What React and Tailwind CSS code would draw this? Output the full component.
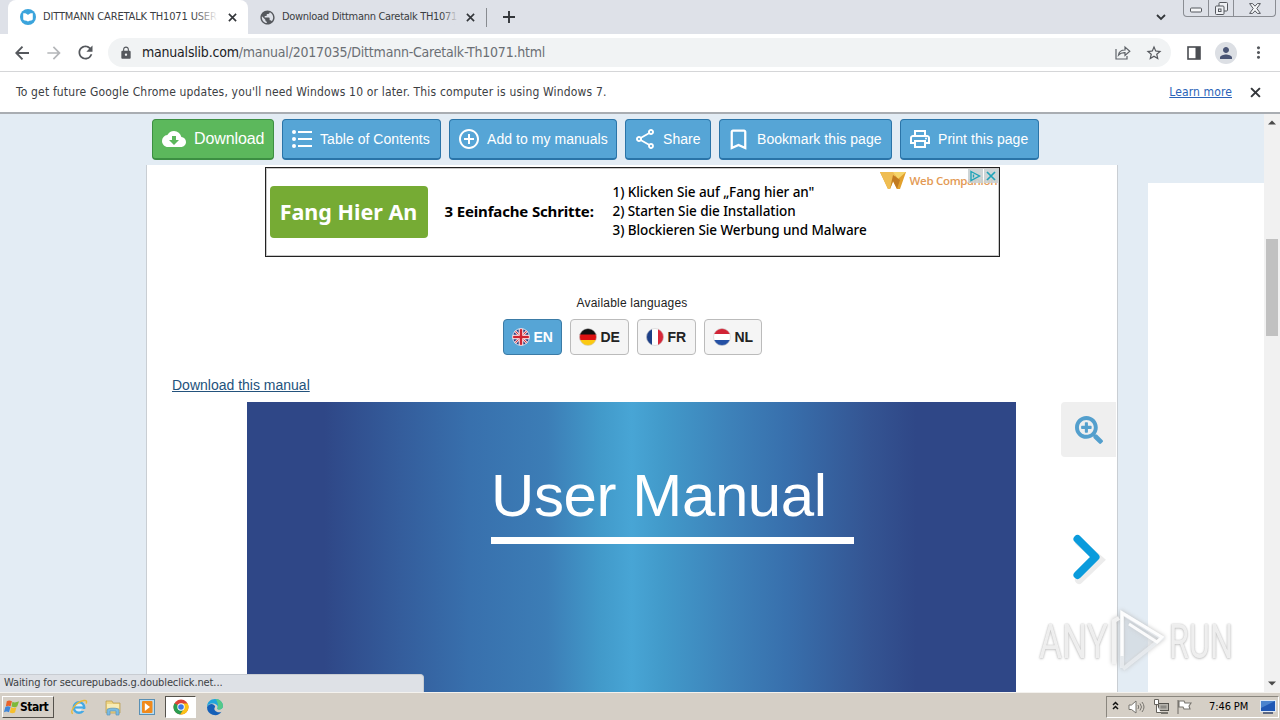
import React from 'react';
import {
  MdArrowForward,
  MdRefresh,
  MdLock,
  MdPublic,
  MdStarBorder,
  MdPerson,
  MdMoreVert,
  MdCloudDownload,
  MdAddCircleOutline,
  MdOutlineShare,
  MdBookmarkBorder,
  MdOutlineLocalPrintshop,
} from 'react-icons/md';
import { FaSearchPlus } from 'react-icons/fa';

const ListIcon = ({ className }) => (
  <svg width="24" height="24" viewBox="0 0 24 24" className={className} fill="currentColor">
    <circle cx="4" cy="5" r="2" />
    <circle cx="4" cy="12" r="2" />
    <circle cx="4" cy="19" r="2" />
    <path d="M8 4h14v2H8zM8 11h14v2H8zM8 18h14v2H8z" />
  </svg>
);

const Cross = ({ size, className }) => (
  <svg width={size} height={size} viewBox="0 0 10 10" className={className}>
    <path d="M1 1l8 8M9 1L1 9" stroke="#33363a" strokeWidth="1.800" />
  </svg>
);

const actions = [
  { label: 'Table of Contents', icon: ListIcon, size: 24, width: 'w-[159px]', pad: 'pl-[7px]', gap: 'gap-[6px]' },
  { label: 'Add to my manuals', icon: MdAddCircleOutline, size: 24, width: 'w-[168px]', pad: 'pl-[7px]', gap: 'gap-[6px]' },
  { label: 'Share', icon: MdOutlineShare, size: 24, width: 'w-[86px]', pad: 'pl-[7px]', gap: 'gap-[6px]' },
  { label: 'Bookmark this page', icon: MdBookmarkBorder, size: 27, width: 'w-[173px]', pad: 'pl-[5px]', gap: 'gap-[5px]' },
  { label: 'Print this page', icon: MdOutlineLocalPrintshop, size: 24, width: 'w-[139px]', pad: 'pl-[7px]', gap: 'gap-[6px]' },
];

const languages = [
  { code: 'EN', active: true },
  { code: 'DE' },
  { code: 'FR' },
  { code: 'NL' },
];

const Flag = ({ code }) => (
  <svg width="18" height="18" viewBox="0 0 18 18">
    <clipPath id={`flag-${code}`}>
      <circle cx="9" cy="9" r="8.6" />
    </clipPath>
    <g clipPath={`url(#flag-${code})`}>
      {code === 'EN' && (
        <>
          <rect width="18" height="18" fill="#2b3a7e" />
          <path d="M0 0l18 18M18 0L0 18" stroke="#fff" strokeWidth="2.6" />
          <path d="M0 0l18 18M18 0L0 18" stroke="#d0323f" strokeWidth="1.1" />
          <path d="M9 0v18M0 9h18" stroke="#fff" strokeWidth="4.6" />
          <path d="M9 0v18M0 9h18" stroke="#d0232f" strokeWidth="2.6" />
        </>
      )}
      {code === 'DE' && (
        <>
          <rect width="18" height="7" fill="#111" />
          <rect y="6.5" width="18" height="5.5" fill="#dd1212" />
          <rect y="12" width="18" height="6" fill="#fbc912" />
        </>
      )}
      {code === 'FR' && (
        <>
          <rect width="18" height="18" fill="#fff" />
          <rect width="6" height="18" fill="#1d3f87" />
          <rect x="12" width="6" height="18" fill="#d8283a" />
        </>
      )}
      {code === 'NL' && (
        <>
          <rect width="18" height="18" fill="#fff" />
          <rect width="18" height="6" fill="#d12436" />
          <rect y="12" width="18" height="6" fill="#2450a4" />
        </>
      )}
    </g>
    {code === 'EN' ? (
      <circle cx="9" cy="9" r="8.4" fill="none" stroke="#fff" strokeWidth="0.8" />
    ) : (
      <circle cx="9" cy="9" r="8.5" fill="none" stroke="#ccc" strokeWidth="0.6" />
    )}
  </svg>
);

const TabStrip = () => (
  <div className="relative flex h-[34px] bg-[#dee1e8] text-[11px] text-[#3a3d42]">
    <div className="ml-2 flex w-[240px] items-center rounded-t-lg bg-white pl-3">
      <svg width="16" height="16" viewBox="0 0 16 16" className="shrink-0">
        <circle cx="8" cy="8" r="8" fill="#3ba4dc" />
        <path d="M3.2 4.3c2-.3 3.600.3 4.800 1.600 1.200-1.300 2.800-1.900 4.800-1.600v5.500c0 1-.6 1.600-1.600 1.800-1.200.1-2.200.3-3.200 1-1-.7-2-.9-3.200-1-1-.2-1.600-.8-1.600-1.800z" fill="#fff" />
      </svg>
      <div className="relative ml-[7px] w-[175px] shrink-0 overflow-hidden whitespace-nowrap tracking-[-0.15px]">
        DITTMANN CARETALK TH1071 USER
        <div className="absolute inset-y-0 right-0 w-6 bg-linear-to-r from-transparent to-white" />
      </div>
      <Cross size={9} className="ml-[10px] shrink-0" />
    </div>
    <div className="flex w-[238px] items-center pl-[11px]">
      <MdPublic size={17} className="shrink-0 text-[#55585d]" />
      <div className="relative ml-[6px] w-[176px] shrink-0 overflow-hidden whitespace-nowrap tracking-[-0.3px]">
        Download Dittmann Caretalk TH1071
        <div className="absolute inset-y-0 right-0 w-4 bg-linear-to-r from-transparent to-[#dee1e8]" />
      </div>
      <Cross size={9} className="ml-[8px] shrink-0" />
    </div>
    <div className="mt-[8px] h-[19px] w-px bg-[#888b90]" />
    <svg width="12" height="12" viewBox="0 0 12 12" className="mt-[11px] ml-[16px]">
      <path d="M6 0v12M0 6h12" stroke="#33363a" strokeWidth="1.900" />
    </svg>
    <svg width="10" height="7" viewBox="0 0 10 7" className="mt-[14px] ml-auto shrink-0">
      <path d="M1 1l4 4 4-4" fill="none" stroke="#33363a" strokeWidth="1.800" />
    </svg>
    <div className="mr-1 ml-[17px] flex h-[17px] w-[93px] rounded-b border border-t-0 border-[#8a8d93]">
      <div className="flex w-[25px] items-center justify-center border-r border-[#8a8d93]">
        <svg width="12" height="6" viewBox="0 0 12 6" className="mt-[4px]">
          <rect x="0.5" y="1" width="11" height="4" rx="1" fill="#f5f6f8" stroke="#55585e" />
        </svg>
      </div>
      <div className="flex w-[25px] items-center justify-center border-r border-[#8a8d93]">
        <svg width="13" height="13" viewBox="0 0 13 13">
          <rect x="4" y="0.500" width="8.500" height="8.500" rx="1" fill="#eef0f4" stroke="#55585e" />
          <rect x="0.500" y="4" width="8.500" height="8.500" rx="1" fill="#eef0f4" stroke="#55585e" />
          <rect x="3.500" y="7" width="2.500" height="2.500" fill="none" stroke="#55585e" />
        </svg>
      </div>
      <div className="flex flex-1 items-center justify-center">
        <svg width="12" height="11" viewBox="0 0 12 11">
          <path d="M0.600 0.600h3L6 3.200 8.400 0.600h3L7.800 5.500l3.600 4.900h-3L6 7.800 3.600 10.400h-3L4.200 5.500z" fill="#f5f6f8" stroke="#55585e" />
        </svg>
      </div>
    </div>
  </div>
);

const AddressBar = () => (
  <div className="flex h-[38px] items-center border-b border-[#d5d6d8] bg-white text-[#55585d]">
    <svg width="14" height="14" viewBox="0 0 14 14" className="ml-[15px]">
      <path d="M14 7H1.500M7.500 0.700L1.300 7l6.200 6.300" fill="none" stroke="#55585d" strokeWidth="1.900" />
    </svg>
    <MdArrowForward size={20} className="ml-[15px] text-[#b4b6b9]" />
    <MdRefresh size={21} className="ml-[11px]" />
    <div className="ml-[12px] flex h-[29px] w-[1063px] items-center rounded-full bg-[#f1f3f4]">
      <MdLock size={14} className="ml-[11px]" />
      <span className="ml-[9px] text-[14px] tracking-[-0.21px] whitespace-nowrap text-[#6b6f74]">
        <span className="text-[#202124]">manualslib.com</span>/manual/2017035/Dittmann-Caretalk-Th1071.html
      </span>
      <svg width="16" height="15" viewBox="0 0 16 15" className="mr-[14px] ml-auto shrink-0">
        <path d="M1 4v10h11v-3M3.500 10C4 6.500 6.500 5 10 5V2l4.800 4.200L10 10.400V7.600C7 7.500 5 8.200 3.500 10z" fill="none" stroke="#5f6368" strokeWidth="1.200" />
      </svg>
      <MdStarBorder size={18} className="mr-[8px] shrink-0" />
    </div>
    <svg width="14" height="14" viewBox="0 0 14 14" className="ml-[16px]">
      <rect x="1" y="1" width="12" height="12" fill="none" stroke="#4a4d52" strokeWidth="1.600" />
      <rect x="8.500" y="1" width="4.500" height="12" fill="#4a4d52" />
    </svg>
    <div className="ml-[14px] flex size-[22px] items-center justify-center rounded-full bg-[#dcdfe4]">
      <MdPerson size={18} className="text-[#4a5575]" />
    </div>
    <MdMoreVert size={19} className="ml-[12px]" />
  </div>
);

const InfoBar = () => (
  <div className="flex h-[42px] items-center border-b-2 border-[#a9adb2] bg-white pl-4 text-[12px] text-[#3c4043]">
    <span className="tracking-[0.165px] whitespace-nowrap">
      To get future Google Chrome updates, you'll need Windows 10 or later. This computer is using Windows 7.
    </span>
    <span className="ml-auto tracking-[0.12px] whitespace-nowrap text-[#2a63b8] underline">Learn more</span>
    <Cross size={11} className="mr-[19px] ml-[18px]" />
  </div>
);

const Ad = () => (
  <div className="relative mx-auto flex h-[90px] w-[735px] items-center border border-[#222] bg-white font-['Noto_Sans'] text-black ring-1 ring-[#222]/25 ring-inset">
    <div className="ml-[4px] flex h-[52px] w-[158px] shrink-0 items-center justify-center rounded bg-[#76ab34] text-[21.500px] font-bold text-white">
      Fang Hier An
    </div>
    <div className="mb-[2px] ml-[17px] w-[168px] shrink-0 text-[15px] font-bold tracking-[-0.15px] whitespace-nowrap">3 Eeinfache Schritte:</div>
    <div className="mb-[2px] text-[13.500px] leading-[19px] font-medium tracking-[-0.07px] whitespace-nowrap">
      <div>1) Klicken Sie auf „Fang hier an"</div>
      <div>2) Starten Sie die Installation</div>
      <div>3) Blockieren Sie Werbung und Malware</div>
    </div>
    <div className="absolute top-[3px] left-[614px] flex items-center gap-[4px]">
      <svg width="26" height="19" viewBox="0 0 26 19">
        <path d="M0 1h26L20 18h-3l-4-8-3 8H8z" fill="#e2a02c" />
        <path d="M0 1h17l-7 17H8z" fill="#efbd52" />
        <path d="M13 1h13l-8 7z" fill="#f5d56a" />
        <path d="M10 18l3-8 4 8 3-9-7-5z" fill="#c17a20" />
      </svg>
      <span className="font-['Open_Sans'] text-[11.500px] font-semibold tracking-[-0.3px] whitespace-nowrap text-[#e39a55]">Web Companion</span>
    </div>
    <div className="absolute top-px right-0 flex gap-px">
      <div className="flex h-[14px] w-[15px] items-center justify-center bg-[#c9d0d2]/90">
        <svg width="12" height="12" viewBox="0 0 12 12">
          <path d="M2 1.500l8.500 4.500L2 10.500zM4.500 4.500v3" fill="none" stroke="#20a3b8" strokeWidth="1.400" />
        </svg>
      </div>
      <div className="flex h-[14px] w-[15px] items-center justify-center bg-[#c9d0d2]/90">
        <svg width="12" height="12" viewBox="0 0 12 12">
          <path d="M2 2l8 8M10 2l-8 8" stroke="#20a3b8" strokeWidth="1.700" />
        </svg>
      </div>
    </div>
  </div>
);

const Manual = () => (
  <div className="mt-[7px] flex h-[290px] pl-[100px]">
    <div className="w-[769px] bg-[linear-gradient(90deg,#2f4787_0%,#2f4787_10%,#345d9c_20%,#3870ad_29%,#3c7db6_39%,#429aca_46%,#48a5d5_50%,#429aca_54%,#3d81b9_63%,#3870ad_70%,#345492_81%,#2f4787_87%,#2f4787_100%)] font-['Liberation_Sans'] text-white">
      <div className="mt-[60px] ml-[244px] text-[60px] leading-[68px] tracking-[-0.4px] whitespace-nowrap">User Manual</div>
      <div className="mt-[7px] ml-[244px] h-[7px] w-[363px] bg-white" />
    </div>
    <div className="ml-auto flex w-[56px] flex-col">
      <div className="flex size-[55px] items-center justify-center rounded-l bg-[#efefef]">
        <FaSearchPlus size={28} className="text-[#539fcd]" />
      </div>
      <svg width="40" height="54" viewBox="0 0 40 54" className="mt-[75px] ml-[9px]">
        <path d="M9 10l21 18L9 48" fill="none" stroke="#ececec" strokeWidth="8" strokeLinecap="round" />
        <path d="M7.500 7l18 18-18 18" fill="none" stroke="#0a9bdc" strokeWidth="8" strokeLinecap="round" strokeLinejoin="round" />
      </svg>
    </div>
  </div>
);

const Watermark = () => (
  <div className="absolute top-[608px] left-[1039px] flex h-[66px] items-center font-['Roboto'] text-[49px] leading-none text-[#f4f4f4]/90 [text-shadow:0_0_2px_#bbb,0_1px_3px_#ccc]">
    <span className="w-[70px] origin-left scale-x-[0.72]">ANY</span>
    <svg width="60" height="66" viewBox="0 0 60 66" className="drop-shadow-[0_0_2px_#bbb]">
      <path d="M16 6l36 22-36 26z" fill="#d3dee8" fillOpacity="0.3" />
      <path d="M13 60V5l40 25-39 31" fill="none" stroke="#ebeff3" strokeOpacity="0.8" strokeWidth="4" />
      <path d="M13 48V5l40 24-5 5-28-18" fill="none" stroke="#fff" strokeOpacity="0.9" strokeWidth="3" />
      <path d="M5 56V13l5-3" fill="none" stroke="#f2f2f2" strokeWidth="4" />
    </svg>
    <span className="origin-left scale-x-[0.66]">RUN</span>
  </div>
);

const Taskbar = () => (
  <div className="flex h-[28px] items-center border-t border-[#f4f2ee] bg-[#d5cfc6] pt-px">
    <div className="ml-[2px] flex h-[22px] w-[52px] items-center border border-t-white border-r-[#55524c] border-b-[#55524c] border-l-white">
      <svg width="17" height="16" viewBox="0 0 18 16" className="shrink-0">
        <path d="M4 2c2-1.500 3.500-1 5.500 0L8 7.500C6.500 6.500 5 6.500 3 7.500z" fill="#e8622a" />
        <path d="M10 2.500c2 1 3.500 1 7-.5l-2 5.500c-2 1-3.500 1-6 0z" fill="#7db93a" />
        <path d="M2.500 8c2-1.200 3.500-1 5.500 0l-1.700 5.500c-1.800-1-3.300-1-5.300 0z" fill="#3f86d8" />
        <path d="M8.500 8.300c2 1 3.500 1 5.700 0l-1.500 5.500c-2 1-3.500 1-5.500 0z" fill="#f6bf2c" />
      </svg>
      <span className="font-['DejaVu_Sans_Condensed'] text-[12px] font-bold tracking-[-0.5px] text-black">Start</span>
    </div>
    <svg width="18" height="18" viewBox="0 0 18 18" className="ml-[16px]">
      <circle cx="9" cy="9.500" r="5.200" fill="#e4eef3" stroke="#45a9e4" strokeWidth="2.600" />
      <path d="M5 9.500h9" stroke="#45a9e4" strokeWidth="2.200" />
      <path d="M11.500 12h6" stroke="#d5cfc6" strokeWidth="2" />
      <path d="M3 15.500C-1 15 5 4 14 2.500c3-.4 3 1.500 2 3" fill="none" stroke="#e9b93a" strokeWidth="1.400" />
    </svg>
    <svg width="18" height="18" viewBox="0 0 18 18" className="ml-[16px]">
      <path d="M2 3h6l1 2h7v10H2z" fill="#eed584" stroke="#b79a45" strokeWidth="0.700" />
      <path d="M3 6h12v4H3z" fill="#f8ecb4" />
      <path d="M3 17v-5c0-2.500 12-2.500 12 0v5h-3v-4H6v4z" fill="#79bce3" stroke="#5b95bd" strokeWidth="0.700" />
    </svg>
    <svg width="16" height="16" viewBox="0 0 16 16" className="ml-[17px]">
      <rect x="0.500" y="0.500" width="15" height="15" fill="#b8dcf2" stroke="#5a90b4" />
      <rect x="3" y="2" width="10.500" height="12" rx="1" fill="#f08a1c" />
      <path d="M5.800 4l5.200 4-5.200 4z" fill="#fff" />
    </svg>
    <div className="ml-[10px] flex h-[22px] w-[31px] items-center justify-center border border-t-[#55524c] border-r-white border-b-white border-l-[#55524c] bg-white">
      <svg width="16" height="16" viewBox="0 0 16 16">
        <circle cx="8" cy="8" r="7.500" fill="#dc4437" />
        <path d="M8 8L1.500 4.200A7.500 7.500 0 0 0 7.200 15.500L11.500 9z" fill="#2a9d50" />
        <path d="M8 4.600h6.700A7.500 7.500 0 0 1 7.200 15.500L11 9.700z" fill="#fbc216" />
        <circle cx="8" cy="8" r="3.700" fill="#fff" />
        <circle cx="8" cy="8" r="2.800" fill="#3b78e7" />
      </svg>
    </div>
    <svg width="18" height="18" viewBox="0 0 18 18" className="ml-[10px]">
      <path d="M1 9a8 8 0 0 0 14.500 4.700c-2 1-5 .8-6.500-1.200-1-1.400-.8-2.800.2-3.800C8 5 3 5 1 9z" fill="#1560b8" />
      <path d="M1 9C1 4 4.500 1 9 1c5 0 8 3.500 8 7 0 2.500-2 3.800-4.500 3.500-1-.1-1.500-.7-1-1.500C12.500 7 9 5.300 6 5.500 3.500 5.700 1.500 7 1 9z" fill="#1fa5dc" />
      <path d="M10 1c4.500.5 7 3.500 7 7 0 2.500-2 3.800-4.500 3.500-1-.1-1.500-.7-1-1.500 1.500-3-.5-6-1.500-9z" fill="#55c988" />
    </svg>
    <div className="mr-[1px] ml-auto flex h-[22px] w-[173px] items-center border border-t-[#8a867e] border-r-white border-b-white border-l-[#8a867e]">
      <svg width="7" height="9" viewBox="0 0 7 9" className="mb-[3px] ml-[5px]">
        <path d="M1 4l2.500-2.500L6 4M1 8l2.500-2.500L6 8" fill="none" stroke="#111" strokeWidth="1.500" />
      </svg>
      <svg width="17" height="14" viewBox="0 0 17 14" className="ml-[9px]">
        <path d="M1 5h2.500L8 1v12L3.500 9.500H1z" fill="#fff" stroke="#77746e" />
        <path d="M10 5q1.500 2 0 4M12 3.500q3 3.500 0 7M14 2q4 5 0 10" fill="none" stroke="#77746e" />
      </svg>
      <svg width="17" height="16" viewBox="0 0 17 16" className="ml-[8px]">
        <rect x="5.500" y="4.500" width="10" height="7" fill="#b5b3ad" stroke="#55534e" />
        <rect x="7.500" y="6.500" width="6" height="3" fill="#8b8984" />
        <path d="M8 14h7" stroke="#77746e" strokeWidth="2" />
        <path d="M1.500 0.500h4v5h-4zM3.500 5.500v8H8" fill="#fff" stroke="#66635d" />
      </svg>
      <svg width="17" height="16" viewBox="0 0 17 16" className="ml-[6px]">
        <path d="M2 1v14M3 2h5l1 2h6l-2 3 1 3H8L7 8H3z" fill="#fff" stroke="#77746e" strokeWidth="1.100" />
      </svg>
      <span className="ml-[16px] text-[11px] tracking-[-0.1px] whitespace-nowrap text-black">7:46 PM</span>
      <svg width="16" height="14" viewBox="0 0 16 14" className="mr-[2px] ml-auto">
        <rect x="0.500" y="0.500" width="15" height="11" fill="#1f57b4" stroke="#dfe9f5" />
        <path d="M1 1h14L1 8z" fill="#4a83ce" />
        <path d="M3 13h10" stroke="#33456a" strokeWidth="1.500" />
      </svg>
    </div>
  </div>
);

const App = () => {
  return (
    <div className="relative flex h-[720px] w-[1280px] flex-col overflow-hidden bg-[#e3ecf4] font-['DejaVu_Sans_Condensed',sans-serif]">
      <TabStrip />
      <AddressBar />
      <InfoBar />

      {/* Page */}
      <div className="flex h-[578px] overflow-hidden">
        <div className="ml-[146px] w-[972px] shrink-0">
          {/* Action buttons */}
          <div className="flex gap-2 pt-[5px] pl-[6px] font-['Liberation_Sans'] text-[14px] text-white">
            <div className="flex h-[41px] w-[122px] items-center gap-[8px] rounded border border-b-2 border-[#3c8f42] bg-[#5cb85c] pl-[9px] text-[16px] tracking-[-0.1px]">
              <MdCloudDownload size={24} className="shrink-0" />
              Download
            </div>
            {actions.map(({ label, icon: Icon, size, width, pad, gap }) => (
              <div
                key={label}
                className={`flex h-[41px] items-center rounded border border-b-2 border-[#2a74a8] bg-[#56a5d6] tracking-[0.05px] whitespace-nowrap ${width} ${pad} ${gap}`}
              >
                <Icon size={size} className="shrink-0" />
                {label}
              </div>
            ))}
          </div>

          {/* Manual viewer */}
          <div className="mt-[5px] h-[528px] border-x border-[#c9ced3] bg-white pt-[2px]">
            <Ad />
            <div className="mt-[38px] text-center font-['Liberation_Sans'] text-[12px] leading-4 tracking-[0.2px] text-[#222]">
              Available languages
            </div>
            <div className="mt-2 flex justify-center gap-2 font-['Liberation_Sans'] text-[14px] font-bold">
              {languages.map(({ code, active }) => (
                <div
                  key={code}
                  className={`flex h-9 items-center gap-[4px] rounded border pl-[8px] ${code === 'NL' ? 'w-[58px]' : 'w-[59px]'} ${
                    active ? 'border-[#3b7ba6] bg-[#56a5d6] text-white' : 'border-[#bbb] bg-[#f5f5f5] text-[#222]'
                  }`}
                >
                  <Flag code={code} />
                  {code}
                </div>
              ))}
            </div>
            <div className="mt-[20px] pl-[25px] font-['Liberation_Sans'] text-[14px] leading-5 text-[#23527c] underline">
              Download this manual
            </div>
            <Manual />
          </div>
        </div>
        <div className="mt-[69px] ml-[30px] w-[116px] bg-white" />
        <div className="flex w-4 flex-col items-center bg-[#f1f1f1]">
          <svg width="8" height="5" viewBox="0 0 8 5" className="mt-[6px]">
            <path d="M0 4.500L4 0.500l4 4z" fill="#4a4a4a" />
          </svg>
          <div className="mt-[114px] h-[97px] w-3 bg-[#c1c1c1]" />
          <svg width="8" height="5" viewBox="0 0 8 5" className="mt-auto mb-[6px]">
            <path d="M0 0.500h8l-4 4z" fill="#4a4a4a" />
          </svg>
        </div>
      </div>

      {/* Status bubble */}
      <div className="absolute top-[674px] left-0 flex h-[18px] w-[424px] items-center rounded-tr border border-b-0 border-l-0 border-[#c8ccd2] bg-[#dee1e6] pl-1 text-[11px] tracking-[-0.11px] whitespace-nowrap text-[#3c4043]">
        Waiting for securepubads.g.doubleclick.net...
      </div>

      <Taskbar />
      <Watermark />
    </div>
  );
};

export default App;
